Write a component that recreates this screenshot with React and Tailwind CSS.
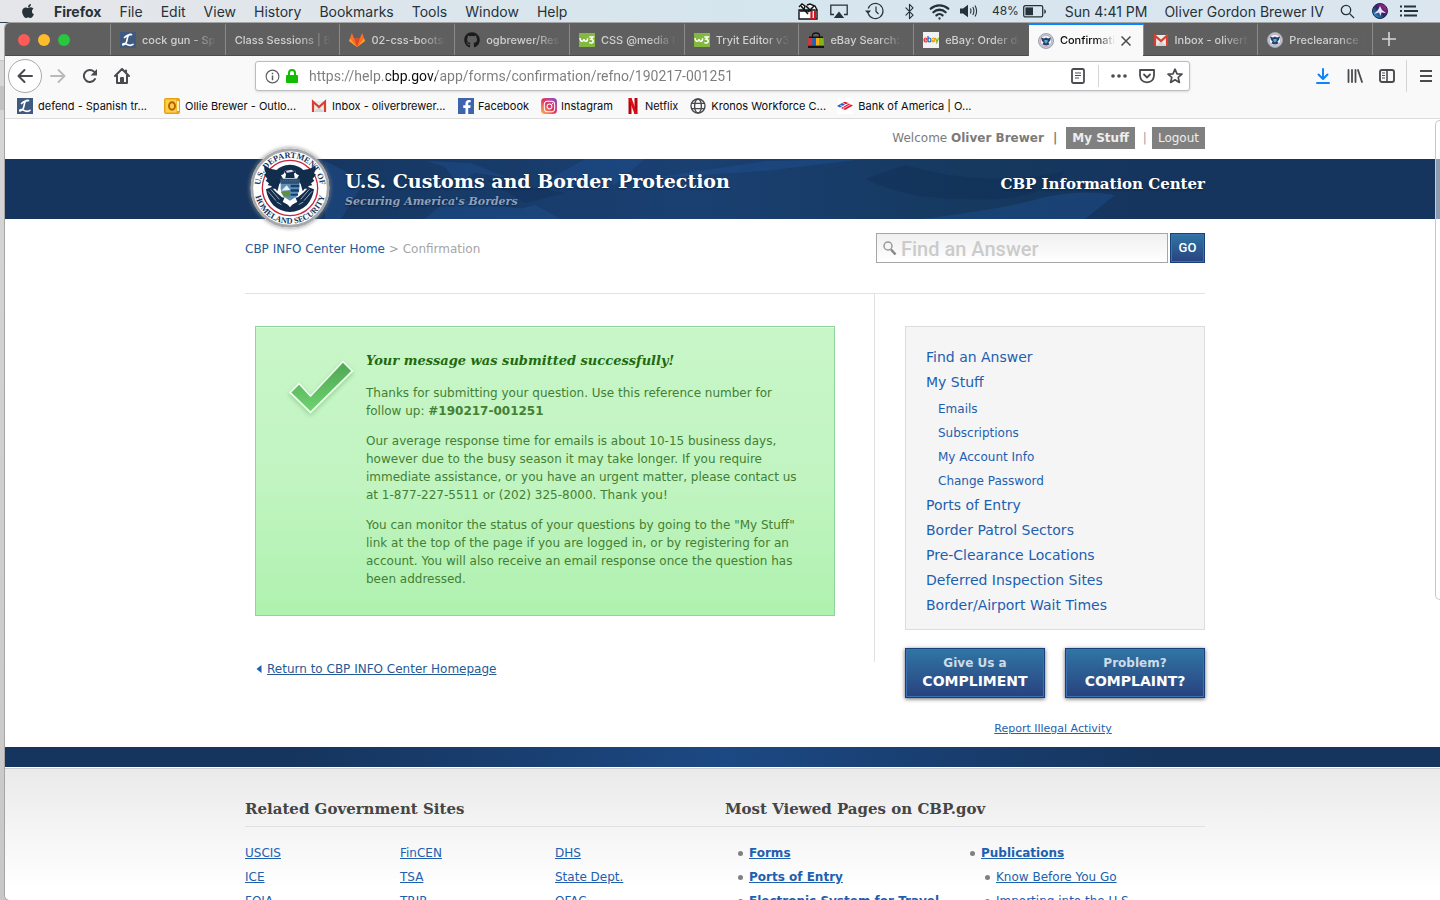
import React from "react";
import { FaApple, FaGithub, FaFacebookF, FaInstagram } from "react-icons/fa";
import { Bluetooth, Wifi } from "lucide-react";

/* ---------- Shared drawings ---------- */

function Seal({ className }) {
  return (
    <svg viewBox="0 0 240 240" className={className} role="img" aria-label="U.S. Department of Homeland Security seal">
      <circle cx="120" cy="120" r="115" fill="#fff" stroke="#a6a8ab" strokeWidth="9" />
      <SealText />
      <SealCore />
    </svg>
  );
}

function SealText() {
  return (
    <g fill="#17365e" fontFamily="Liberation Serif, serif" fontWeight="700" fontSize="25">
      <defs>
        <path id="seal-top" d="M30 120 A90 90 0 0 1 210 120" />
        <path id="seal-bottom" d="M13 120 A107 107 0 0 0 227 120" />
      </defs>
      <text textAnchor="middle"><textPath href="#seal-top" startOffset="50%">U.S. DEPARTMENT OF</textPath></text>
      <text textAnchor="middle"><textPath href="#seal-bottom" startOffset="50%">HOMELAND SECURITY</textPath></text>
    </g>
  );
}

function SealCore() {
  return (
    <g>
      <circle cx="120" cy="120" r="83" fill="#fff" stroke="#c8243c" strokeWidth="4" />
      <path d="M44 52 L60 62 L80 66 Q92 52 120 50 Q148 52 160 66 L180 62 L196 52 Q200 64 192 76 L198 80 L188 92 L193 98 L183 106 L187 112 L175 114 L177 122 L164 122 L158 130 L152 108 L140 94 L147 82 L139 78 L135 68 L120 65 L105 68 L101 78 L93 82 L100 94 L88 108 L82 130 L76 122 L63 122 L65 114 L53 112 L57 106 L47 98 L52 92 L42 80 L48 76 Q40 64 44 52Z" fill="#122c4c" />
      <path d="M103 72 Q108 62 122 62 Q134 64 138 74 L132 76 L134 90 L106 90 L108 78Z" fill="#122c4c" />
      <path d="M108 68 L124 65 L132 70 L122 73 L110 74Z" fill="#fff" opacity=".85" />
      <path d="M92 92 L148 92 L148 122 Q145 150 120 160 Q95 150 92 122Z" fill="#5f8fb5" />
      <path d="M92 92H148V107H92Z" fill="#244a70" />
      <path d="M94 97H146M94 102H146" stroke="#7f9bb5" strokeWidth="1.5" strokeDasharray="3 3" />
      <path d="M94 128 L110 112 L121 126Z" fill="#e8f0f4" />
      <path d="M93 132 L120 128 L120 146 L100 144Z" fill="#5d9140" />
      <path d="M122 110H148V118H122ZM122 124H147V131H122ZM122 137H144V143H122Z" fill="#173f6d" />
      <path d="M48 124 L64 118 L80 134 L96 148 L106 150 L104 164 L120 174 L136 164 L134 150 L144 148 L160 134 L176 118 L192 124 Q188 152 170 172 Q148 192 120 192 Q92 192 70 172 Q52 152 48 124Z" fill="#122c4c" />
      <path d="M54 130L78 158M62 124L88 154M186 130L162 158M178 124L152 154M80 162L94 170M160 162L146 170" stroke="#aebccb" strokeWidth="2.6" fill="none" />
      <path d="M104 148L120 158L136 148L142 162L128 168L120 178L112 168L98 162Z" fill="#fff" />
    </g>
  );
}

function MiniSeal() {
  return (
    <svg viewBox="0 0 16 16" className="size-4 shrink-0" aria-hidden="true">
      <circle cx="8" cy="8" r="7.5" fill="#c3cad3" stroke="#9aa5b3" />
      <circle cx="8" cy="8" r="5.6" fill="#f7f7f9" stroke="#c98c9a" strokeWidth=".6" />
      <path d="M3 4.6L6 5.4L8 4.6L10 5.4L13 4.6L12 8L10.4 9.6L11.6 11.2Q8 13.8 4.4 11.2L5.6 9.6L4 8Z" fill="#1d4470" />
      <path d="M6.4 7H9.6V9L8 10.6L6.4 9Z" fill="#6fa3c9" />
    </svg>
  );
}

function LIcon() {
  return (
    <svg viewBox="0 0 16 16" className="size-4 shrink-0" aria-hidden="true">
      <rect width="16" height="16" fill="#3f5a80" />
      <path d="M11.5 2.5C9 1.5 7.6 4 7.2 7C6.8 10 5.6 12.6 3 13C2 12 4 11 6 12C9 13.6 11 14 13 12.4M4.5 5.5C6 4 8.5 2.5 11.5 2.5" fill="none" stroke="#fff" strokeWidth="1.7" strokeLinecap="round" />
    </svg>
  );
}

function GitLabIcon() {
  return (
    <svg viewBox="0 0 16 16" className="size-4 shrink-0" aria-hidden="true">
      <path d="M8 15L0 9L2.8 1L5.2 6.5H10.8L13.2 1L16 9Z" fill="#fc6d26" />
      <path d="M8 15L5.2 6.5H10.8Z" fill="#e24329" />
      <path d="M8 15L0 9L1 6.5ZM8 15L16 9L15 6.5Z" fill="#fca326" />
    </svg>
  );
}

function GmailIcon() {
  return (
    <svg viewBox="0 0 16 16" className="size-4 shrink-0" aria-hidden="true">
      <path d="M1 3H15V14H1Z" fill="#eceaea" />
      <path d="M3 14L8 9L13 14Z" fill="#d6d3d3" />
      <path d="M2 14V3.6L8 9L14 3.6V14" fill="none" stroke="#d5402f" strokeWidth="2.2" />
    </svg>
  );
}

function W3Icon() {
  return (
    <svg viewBox="0 0 16 16" className="size-4 shrink-0" aria-hidden="true">
      <rect y="1" width="16" height="14" fill="#84b840" />
      <path d="M1 6Q1.5 9.5 3.2 9.3Q4.8 9 5 7Q5.4 9.5 7 9.2Q8.6 9 8.6 6.2M10.2 5H14L12 7.2Q14.6 7.4 14.2 9.6Q13.4 11.8 10.2 10.6" fill="none" stroke="#fff" strokeWidth="1.5" />
    </svg>
  );
}

function EbayBag() {
  return (
    <svg viewBox="0 0 16 16" className="size-4 shrink-0" aria-hidden="true">
      <path d="M4.5 5V3.5Q4.5 1 8 1Q11.5 1 11.5 3.5V5" fill="none" stroke="#151515" strokeWidth="1.3" />
      <path d="M1 4.4H15V6H1ZM0 13.4H16V16H0Z" fill="#151515" />
      <path d="M.4 6H4.4V13.4H0Z" fill="#e03236" /><path d="M4.4 6H8V13.4H4.4Z" fill="#1764c8" />
      <path d="M8 6H11.6V13.4H8Z" fill="#f2ae14" /><path d="M11.6 6H15.6L16 13.4H11.6Z" fill="#84b31c" />
    </svg>
  );
}

function EbayLogo() {
  return (
    <svg viewBox="0 0 16 16" className="size-4 shrink-0" aria-hidden="true">
      <rect width="16" height="16" fill="#f2f2f2" />
      <g fill="none" strokeWidth="1.2">
        <path d="M1 8H4Q4 6 2.5 6Q1 6 1 8Q1 10 2.6 10Q3.4 10 4 9.3" stroke="#e03236" />
        <path d="M5 4V10M5 8Q5 6 6.5 6Q8 6 8 8Q8 10 6.5 10Q5 10 5 8" stroke="#1764c8" />
        <path d="M9 6.6Q11.6 5.2 11.6 7.5V10M11.6 8Q8.8 8 9 9.2Q9.6 10.6 11.6 9" stroke="#e9a512" />
        <path d="M12.4 6L14 9.6M15.6 6L13.4 11.6" stroke="#84b31c" />
      </g>
    </svg>
  );
}

/* ---------- System menu bar ---------- */

function MenuBar() {
  const menus = ["File", "Edit", "View", "History", "Bookmarks", "Tools", "Window", "Help"];
  return (
    <header className="flex h-[23px] shrink-0 items-center border-b border-[#2f3f4c] bg-linear-to-r from-[#e6e6e9] via-[#d5e5ee] to-[#dbe6ef] pr-[22px] pl-5 font-[Inter,sans-serif] text-[14px] text-[#26323a]">
      <FaApple className="size-4" aria-label="Apple menu" />
      <nav className="ml-[18px] flex items-center gap-[18px]">
        <button className="font-bold">Firefox</button>
        {menus.map((m) => <button key={m}>{m}</button>)}
      </nav>
      <div className="ml-auto flex items-center whitespace-nowrap">
        <svg viewBox="0 0 20 17" className="h-[17px] w-5" aria-hidden="true">
          <path d="M1 7H19V16H1Z" fill="#fff" stroke="#111" strokeWidth="1.4" />
          <path d="M1 4L4 1L7 3L6 6M9 2L12 1L17 3L19 7" fill="#fff" stroke="#111" strokeWidth="1.4" />
          <path d="M3 3L10 11M8 3L14 9M10 9L16 3M2 8H12" stroke="#111" strokeWidth="1.5" />
          <path d="M13.5 8V16M17 8V16" stroke="#d8121c" strokeWidth="2.2" />
        </svg>
        <svg viewBox="0 0 18 15" className="ml-3 h-[15px] w-[18px]" aria-hidden="true">
          <path d="M4 10.5H.8V1.2H17.2V10.5H14" fill="none" stroke="#26323a" strokeWidth="1.3" />
          <path d="M9 7.5L14.2 14H3.8Z" fill="#26323a" />
        </svg>
        <svg viewBox="0 0 20 18" className="ml-[17px] h-[18px] w-5" fill="none" stroke="#26323a" strokeWidth="1.2" aria-hidden="true">
          <path d="M3.2 11.5A7.6 7.6 0 1 0 3.2 6.5" /><path d="M11 4.5V9.5L13.5 12" /><path d="M0 8.4H6L3 12Z" fill="#26323a" stroke="none" />
        </svg>
        <Bluetooth className="ml-4 size-[17px]" strokeWidth={1.6} />
        <Wifi className="ml-[11px] size-[21px]" strokeWidth={2.6} />
        <svg viewBox="0 0 18 14" className="ml-[10px] h-[14px] w-[18px]" aria-hidden="true">
          <path d="M0 4.5H3L8 .8V13.2L3 9.5H0Z" fill="#26323a" />
          <path d="M10.4 4.6Q11.6 7 10.4 9.4M12.8 3Q15 7 12.8 11M15 1.4Q18.2 7 15 12.6" fill="none" stroke="#26323a" strokeWidth="1.1" />
        </svg>
        <span className="ml-[14px] text-[12px]">48%</span>
        <svg viewBox="0 0 24 13" className="ml-1 h-[13px] w-6" aria-hidden="true">
          <rect x=".7" y=".7" width="19" height="11.2" rx="1.6" fill="none" stroke="#26323a" strokeWidth="1.3" />
          <rect x="2.4" y="2.4" width="7.6" height="7.8" fill="#26323a" /><path d="M21.3 4V9Q23 8 23 6.5Q23 5 21.3 4Z" fill="#26323a" />
        </svg>
        <span className="ml-[18px]">Sun 4:41 PM</span>
        <span className="ml-[17px]">Oliver Gordon Brewer IV</span>
        <svg viewBox="0 0 16 16" className="ml-4 size-[15px]" fill="none" stroke="#26323a" strokeWidth="1.4" aria-hidden="true">
          <circle cx="6.4" cy="6.4" r="5" /><path d="M10 10L15 15" />
        </svg>
        <svg viewBox="0 0 16 16" className="ml-[17px] size-4" aria-hidden="true">
          <defs><linearGradient id="siri" x1="0" y1="1" x2="1" y2="0"><stop offset="0" stopColor="#1ac7e8" /><stop offset=".5" stopColor="#2b2268" /><stop offset="1" stopColor="#e0289c" /></linearGradient></defs>
          <circle cx="8" cy="8" r="7.5" fill="url(#siri)" stroke="#20244c" />
          <path d="M8 3L10 7L14 10L9.5 9.5L8.5 13L7 9.5L2 11L6 7Z" fill="#e8e4ff" />
        </svg>
        <svg viewBox="0 0 18 12" className="ml-3 h-3 w-[18px]" stroke="#26323a" strokeWidth="1.8" aria-hidden="true">
          <path d="M0 1.5H2M0 6H2M0 10.5H2M4 1.5H16M4 6H18M4 10.5H17" />
        </svg>
      </div>
    </header>
  );
}

/* ---------- Browser chrome ---------- */

const tabs = [
  { title: "cock gun - Spanish", icon: <LIcon /> },
  { title: "Class Sessions | Boot", icon: null },
  { title: "02-css-bootstrap", icon: <GitLabIcon /> },
  { title: "ogbrewer/Respons", icon: <FaGithub className="size-4 shrink-0 text-[#1b1b1b]" /> },
  { title: "CSS @media Rule", icon: <W3Icon /> },
  { title: "Tryit Editor v3.6", icon: <W3Icon /> },
  { title: "eBay Search: Adv", icon: <EbayBag /> },
  { title: "eBay: Order details", icon: <EbayLogo /> },
  { title: "Confirmation", icon: <MiniSeal />, active: true },
  { title: "Inbox - oliverbrewer", icon: <GmailIcon /> },
  { title: "Preclearance Loc", icon: <MiniSeal /> },
];

function TabStrip() {
  return (
    <div className="flex h-[33px] shrink-0 border-b border-[#4c4c4c] bg-[#5f5f5f] text-[11px]">
      <div className="flex w-[105px] shrink-0 items-center gap-2 pt-px pl-[13px]">
        <button aria-label="Close window" className="size-3 rounded-full bg-[#fc5b57]" />
        <button aria-label="Minimize window" className="size-3 rounded-full bg-[#fdbc2e]" />
        <button aria-label="Zoom window" className="size-3 rounded-full bg-[#28c73f]" />
      </div>
      <div className="flex min-w-0 flex-1" role="tablist">
        {tabs.map((t, i) => (
          <div
            key={i}
            className={
              t.active
                ? "-mb-px flex min-w-0 flex-1 items-center border-t-2 border-l border-t-[#0a84ff] border-l-[#5f5f5f] bg-[#f9f9fa] pr-2 pl-[9px] text-[#0c0c0d]"
                : "flex min-w-0 flex-1 items-center border-t-2 border-l border-t-transparent border-l-[#8a8a8a] pr-2 pl-[9px] text-[#d0d0d0]"
            }
          >
            <button role="tab" aria-selected={!!t.active} className="flex min-w-0 flex-1 items-center gap-[6px] text-left font-medium">
              {t.icon}
              <span className="min-w-0 flex-1 overflow-hidden [mask-image:linear-gradient(to_right,black_65%,transparent)] whitespace-nowrap">{t.title}</span>
            </button>
            {t.active && (
              <button aria-label="Close tab" className="mr-1 ml-[6px]">
                <svg viewBox="0 0 10 10" className="size-[10px]" stroke="#4a4a4f" strokeWidth="1.5"><path d="M.5 .5L9.5 9.5M9.5 .5L.5 9.5" /></svg>
              </button>
            )}
          </div>
        ))}
      </div>
      <div className="flex w-[73px] shrink-0 items-center border-l border-[#8a8a8a] pl-[9px]">
        <button aria-label="New tab">
          <svg viewBox="0 0 14 14" className="size-[14px]" stroke="#d8d8d8" strokeWidth="1.6"><path d="M7 0V14M0 7H14" /></svg>
        </button>
      </div>
    </div>
  );
}

function NavBar() {
  const ib = "flex size-8 shrink-0 items-center justify-center";
  return (
    <div className="flex h-10 shrink-0 items-center bg-[#f9f9fa] pr-[3px] pl-[3px] text-[#4a4a4f]">
      <button aria-label="Back" className="flex size-[34px] shrink-0 items-center justify-center rounded-full border border-[#a9a9ab] bg-white">
        <svg viewBox="0 0 16 16" className="size-4" fill="none" stroke="#4a4a4f" strokeWidth="2" strokeLinecap="round" strokeLinejoin="round"><path d="M15 8H1.5M7.5 2L1.5 8L7.5 14" /></svg>
      </button>
      <button aria-label="Forward" disabled className={ib}>
        <svg viewBox="0 0 16 16" className="size-4" fill="none" stroke="#b9b9bb" strokeWidth="1.8" strokeLinecap="round" strokeLinejoin="round"><path d="M1 8H14.5M8.5 2L14.5 8L8.5 14" /></svg>
      </button>
      <button aria-label="Reload" className={ib}>
        <svg viewBox="0 0 16 16" className="size-4" fill="none" stroke="currentColor" strokeWidth="2" strokeLinecap="round"><path d="M13 11A6 6 0 1 1 12 3.6" /><path d="M15 1V7.4H8.6Z" fill="currentColor" stroke="none" /></svg>
      </button>
      <button aria-label="Home" className={ib}>
        <svg viewBox="0 0 16 16" className="size-4" fill="none" stroke="currentColor" strokeWidth="2" strokeLinecap="round" strokeLinejoin="round"><path d="M1 8L8 1L15 8M3 7.5V15H13V7.5" /><path d="M7 15V10H9V15" /><path d="M12 2.5V4" /></svg>
      </button>
      <div className="mr-[117px] ml-[117px] flex h-[30px] min-w-0 flex-1 items-center rounded-[3px] border border-[#bdbdbf] bg-white shadow-sm">
        <svg viewBox="0 0 16 16" className="ml-[9px] size-[15px] shrink-0" fill="none" stroke="#5c5c60" strokeWidth="1.2" aria-hidden="true"><circle cx="8" cy="8" r="6.8" /><path d="M8 7V12M8 4V5.6" strokeWidth="1.6" /></svg>
        <svg viewBox="0 0 12 14" className="ml-[6px] h-[14px] w-3 shrink-0" aria-hidden="true"><path d="M3 7V4Q3 1 6 1Q9 1 9 4V7" fill="none" stroke="#12bc00" strokeWidth="2" /><rect y="6" width="12" height="8" rx="1" fill="#12bc00" /></svg>
        <label htmlFor="url" className="sr-only">Address</label>
        <input
          id="url"
          defaultValue="https://help.cbp.gov/app/forms/confirmation/refno/190217-001251"
          className="ml-[11px] min-w-0 flex-1 bg-linear-[to_right,#7c7c80_77px,#0c0c0d_77px,#0c0c0d_127px,#7c7c80_127px] bg-clip-text pt-px font-[Roboto,sans-serif] text-[14px] text-transparent outline-none"
        />
        <button aria-label="Reader view" className="shrink-0">
          <svg viewBox="0 0 14 16" className="h-4 w-[14px]" fill="none" stroke="currentColor"><rect x="1" y="1" width="12" height="14" rx="1.5" strokeWidth="1.8" /><path d="M4 5H10M4 7.5H10M4 10H8" /></svg>
        </button>
        <span className="ml-[13px] h-[22px] w-px shrink-0 bg-[#d4d4d6]" />
        <button aria-label="Page actions" className="ml-3 shrink-0">
          <svg viewBox="0 0 16 4" className="h-1 w-4" fill="currentColor"><circle cx="2" cy="2" r="1.8" /><circle cx="8" cy="2" r="1.8" /><circle cx="14" cy="2" r="1.8" /></svg>
        </button>
        <button aria-label="Save to Pocket" className="ml-3 shrink-0">
          <svg viewBox="0 0 16 16" className="size-4" fill="none" stroke="currentColor" strokeWidth="1.8" strokeLinecap="round" strokeLinejoin="round"><path d="M1 2H15V7.5Q14.5 14 8 14.4Q1.5 14 1 7.5Z" /><path d="M5 6.5L8 9.5L11 6.5" /></svg>
        </button>
        <button aria-label="Bookmark this page" className="mr-[6px] ml-3 shrink-0">
          <svg viewBox="0 0 16 16" className="size-4" fill="none" stroke="currentColor" strokeWidth="1.7" strokeLinejoin="round"><path d="M8 1.2L10 5.8L15 6.2L11.2 9.4L12.4 14.4L8 11.8L3.6 14.4L4.8 9.4L1 6.2L6 5.8Z" /></svg>
        </button>
      </div>
      <button aria-label="Downloads" className={ib}>
        <svg viewBox="0 0 14 16" className="h-4 w-[14px]" fill="none" stroke="#0a84ff" strokeWidth="2" strokeLinecap="round" strokeLinejoin="round"><path d="M7 1V10.5M2.5 6.5L7 11L11.5 6.5M1 15H13" /></svg>
      </button>
      <button aria-label="Library" className={ib}>
        <svg viewBox="0 0 16 16" className="size-4" fill="none" stroke="currentColor" strokeWidth="1.8" strokeLinecap="round"><path d="M1.5 2V14M5 2V14M8.5 2V14M11 2L15 14" /></svg>
      </button>
      <button aria-label="Sidebars" className={ib}>
        <svg viewBox="0 0 16 16" className="size-4" fill="none" stroke="currentColor"><rect x="1" y="2" width="14" height="12" rx="2" strokeWidth="1.9" /><path d="M8 2V14" strokeWidth="1.6" /><path d="M3 5H6M3 7.5H6M3 10H6" /></svg>
      </button>
      <span className="ml-[3px] h-8 w-px shrink-0 bg-[#d4d4d6]" />
      <button aria-label="Open menu" className="ml-[3px] flex size-8 shrink-0 items-center justify-center">
        <svg viewBox="0 0 14 12" className="h-3 w-[14px]" stroke="currentColor" strokeWidth="2"><path d="M1 1H13M1 6H13M1 11H13" /></svg>
      </button>
    </div>
  );
}

const bookmarks = [
  { title: "defend - Spanish tr...", wide: true, icon: <LIcon /> },
  {
    title: "Ollie Brewer - Outlo...", wide: true,
    icon: (
      <svg viewBox="0 0 16 16" className="size-4 shrink-0" aria-hidden="true">
        <rect width="16" height="16" rx="2" fill="#e9a013" /><rect x="1.5" y="1.5" width="11" height="13" fill="#fbd04a" /><path d="M13 3H15V13H13Z" fill="#fff3c4" /><ellipse cx="8" cy="8" rx="3" ry="3.8" fill="none" stroke="#b86300" strokeWidth="2" />
      </svg>
    ),
  },
  { title: "Inbox - oliverbrewer...", wide: true, icon: <GmailIcon /> },
  { title: "Facebook", icon: <span className="flex size-4 shrink-0 items-end justify-end bg-[#4064ac]"><FaFacebookF className="size-[14px] text-white" /></span> },
  { title: "Instagram", icon: <span className="flex size-4 shrink-0 items-center justify-center rounded bg-linear-to-tr from-[#fdb447] via-[#e5305f] to-[#7a3fd0]"><FaInstagram className="size-[13px] text-white" /></span> },
  { title: "Netflix", icon: <svg viewBox="0 0 16 16" className="size-4 shrink-0" aria-hidden="true"><path d="M3.5 0H6.5V16H3.5ZM9.5 0H12.5V16H9.5Z" fill="#b1060f" /><path d="M3.5 0H6.5L12.5 16H9.5Z" fill="#e50914" /></svg> },
  { title: "Kronos Workforce C...", wide: true, icon: <svg viewBox="0 0 16 16" className="size-4 shrink-0" fill="none" stroke="#4a4a4f" strokeWidth="1.4" aria-hidden="true"><circle cx="8" cy="8" r="7" /><ellipse cx="8" cy="8" rx="3.4" ry="7" /><path d="M1.6 5.4H14.4M1.6 10.6H14.4" /></svg> },
  { title: "Bank of America | O...", wide: true, icon: <svg viewBox="0 0 16 16" className="size-4 shrink-0" aria-hidden="true"><rect width="16" height="16" fill="#fff" /><path d="M0 8L5 5L8 6.5L3 9.5Z" fill="#2a5ebc" /><path d="M4 10L12 5.5L16 7.5L8 12ZM5.5 4.8L8 3.8L11.5 5L9 6.2Z" fill="#dc1f35" /><path d="M6 10.6L13.6 6.4M3 7L7 9" stroke="#fff" strokeWidth=".7" /></svg> },
];

function BookmarksBar() {
  return (
    <nav className="flex h-[23px] shrink-0 items-center border-b border-[#dcdcdd] bg-[#f9f9fa] pb-[2px] pl-3 text-[11px] text-[#0c0c0d]">
      {bookmarks.map((b) => (
        <a key={b.title} href="#" className={b.wide ? "flex w-[147px] shrink-0 items-center gap-[5px] whitespace-nowrap" : "flex shrink-0 items-center gap-[4px] pr-3 whitespace-nowrap"}>
          {b.icon}
          {b.title}
        </a>
      ))}
    </nav>
  );
}

/* ---------- Site ---------- */

const container = "mx-auto w-full max-w-[960px]";

function Masthead() {
  return (
    <>
      <div className={container + " flex h-10 items-center justify-end pb-[3px] text-[12px] text-[#7b7b7b]"}>
        <span>Welcome <b>Oliver Brewer</b></span>
        <b className="mx-[9px]">|</b>
        <a href="#" className="bg-[#808080] px-[6px] leading-[22px] font-bold text-[#eee]">My Stuff</a>
        <span className="mr-[5px] ml-2 text-[#a0a0a0]">|</span>
        <a href="#" className="bg-[#808080] px-[6px] leading-[22px] text-[#eee]">Logout</a>
      </div>
      <div className="relative bg-[#15355e]">
        <svg viewBox="0 0 1440 60" preserveAspectRatio="xMidYMid slice" className="absolute inset-0 size-full" aria-hidden="true">
          <defs>
            <linearGradient id="flag" x1="0" x2="1"><stop offset="0" stopColor="#15355e" /><stop offset=".5" stopColor="#1a4072" /><stop offset=".8" stopColor="#15395f" /><stop offset="1" stopColor="#15355e" /></linearGradient>
          </defs>
          <rect x="240" width="900" height="60" fill="url(#flag)" />
          <g fill="#1f5090" opacity=".45">
            <path d="M320 2L360 22L336 60L320 60ZM422 2L466 4L500 18L470 14L452 24L440 8ZM548 18L580 0L640 0L610 26L580 20L556 32ZM436 46L462 42L520 50L540 60H420ZM490 56L530 46L556 60H490Z" />
            <path d="M640 20L760 2L860 0L760 12ZM916 60Q1000 50 1040 38Q1080 30 1110 36L1080 60Z" />
          </g>
          <path d="M900 6Q980 30 1060 12Q1040 44 960 40Q900 40 860 20ZM480 20L560 34L520 44Z" fill="#0f2b50" opacity=".35" />
        </svg>
        <div className={container + " relative flex h-[60px] justify-between pl-[100px] font-['DejaVu_Serif',serif] font-bold text-white"}>
          <Seal className="absolute -top-[11px] left-[5px] size-20 rounded-full shadow-[0_0_4px_#888]" />
          <div className="pt-[10px] [text-shadow:0_1px_2px_#0a2240]">
            <h1 className="text-[19px] leading-6">U.S. Customs and Border Protection</h1>
            <p className="text-[11px] leading-[18px] text-[#8fa0b8] italic">Securing America&apos;s Borders</p>
          </div>
          <h2 className="pt-[13px] text-[15px] leading-6 [text-shadow:0_1px_2px_#0a2240]">CBP Information Center</h2>
        </div>
      </div>
    </>
  );
}

function SearchRow() {
  return (
    <div className={container + " flex items-start justify-between border-b border-[#e3e3e3] pt-[14px] pb-7"}>
      <nav className="text-[12px] leading-8 text-[#a5a5a5]">
        <a href="#" className="text-[#255a96]">CBP INFO Center Home</a> &gt; Confirmation
      </nav>
      <form className="flex gap-[2px]" onSubmit={(e) => e.preventDefault()}>
        <label htmlFor="search" className="flex h-[30px] w-[292px] items-center border border-[#a6a6a6] bg-linear-to-b from-[#f0f0f0] to-white pl-[6px]">
          <svg viewBox="0 0 14 15" className="h-[15px] w-[14px] shrink-0" fill="none" aria-hidden="true"><circle cx="5" cy="5" r="4" stroke="#999" strokeWidth="1.5" /><path d="M8 8.5L12.5 13.5" stroke="#888" strokeWidth="2.6" /></svg>
          <input id="search" placeholder="Find an Answer" aria-label="Find an Answer" className="ml-1 min-w-0 flex-1 bg-transparent pt-px font-[Roboto,sans-serif] text-[20px] leading-7 font-medium outline-none placeholder:text-[#cbcbcb]" />
        </label>
        <button className="h-[30px] w-[35px] border border-[#173f7c] bg-linear-to-b from-[#2f76a5] to-[#28427f] font-[Roboto,sans-serif] text-[13px] font-medium text-white shadow-[inset_0_0_0_1px_#3a72b4]">GO</button>
      </form>
    </div>
  );
}

function Success() {
  return (
    <section className="flex h-[290px] border border-[#8fd49a] bg-linear-to-b from-[#c8f6c8] via-[#c2f4c2] to-[#aff1af] shadow-[inset_0_1px_0_#e2fbe2]">
      <div className="w-[110px] shrink-0 pt-[31px] pl-[31px]">
        <svg viewBox="0 0 68 60" className="h-[60px] w-[68px] drop-shadow-[0_2px_2px_rgba(60,150,60,.35)]" aria-hidden="true">
          <defs><linearGradient id="check" x1="0" y1="0" x2="0" y2="1"><stop offset="0" stopColor="#4fa653" /><stop offset="1" stopColor="#6fd371" /></linearGradient></defs>
          <path d="M3 34.5L12 25.5L23.5 38L56 3.5L65.5 13L23.5 54.5Z" fill="url(#check)" stroke="#ecfbec" strokeWidth="1.8" />
        </svg>
      </div>
      <div className="pt-6 text-[12px] leading-[18px] whitespace-nowrap text-[#447f33]">
        <h2 className="font-['DejaVu_Serif',serif] text-[13px] leading-5 font-bold text-[#23690f] italic">Your message was submitted successfully!</h2>
        <p className="mt-[13px]">Thanks for submitting your question. Use this reference number for<br />follow up: <b>#190217-001251</b></p>
        <p className="mt-3">Our average response time for emails is about 10-15 business days,<br />however due to the busy season it may take longer. If you require<br />immediate assistance, or you have an urgent matter, please contact us<br />at 1-877-227-5511 or (202) 325-8000. Thank you!</p>
        <p className="mt-3">You can monitor the status of your questions by going to the &quot;My Stuff&quot;<br />link at the top of the page if you are logged in, or by registering for an<br />account. You will also receive an email response once the question has<br />been addressed.</p>
      </div>
    </section>
  );
}

function Sidebar() {
  const cta = "flex h-[50px] flex-1 flex-col items-center justify-center border border-[#173f7c] bg-linear-to-b from-[#2f76a5] to-[#28427f] pb-[2px] text-[12px] leading-[18px] font-bold text-[#cfdbe6] shadow-[inset_0_0_0_1px_#3a72b4,0_1px_4px_#666]";
  return (
    <aside className="w-[300px] shrink-0 pt-8">
      <nav className="h-[304px] border border-[#dcdcdc] bg-[#f5f5f5] pt-[18px] pl-5 text-[14px] leading-[25px] text-[#1d60b0]">
        <ul>
          <li><a href="#">Find an Answer</a></li>
          <li>
            <a href="#">My Stuff</a>
            <ul className="pt-[2px] pl-3 text-[12px] leading-6">
              {["Emails", "Subscriptions", "My Account Info", "Change Password"].map((s) => <li key={s}><a href="#">{s}</a></li>)}
            </ul>
          </li>
          {["Ports of Entry", "Border Patrol Sectors", "Pre-Clearance Locations", "Deferred Inspection Sites", "Border/Airport Wait Times"].map((s) => <li key={s}><a href="#">{s}</a></li>)}
        </ul>
      </nav>
      <div className="mt-[18px] flex gap-5">
        <a href="#" className={cta}>Give Us a<span className="text-[14px] text-white">COMPLIMENT</span></a>
        <a href="#" className={cta}>Problem?<span className="text-[14px] text-white">COMPLAINT?</span></a>
      </div>
      <p className="mt-[21px] pr-1 pb-2 text-center text-[11px] leading-5"><a href="#" className="text-[#1d60b0] underline">Report Illegal Activity</a></p>
    </aside>
  );
}

function Footer() {
  const gov = [["USCIS", "ICE", "FOIA"], ["FinCEN", "TSA", "TRIP"], ["DHS", "State Dept.", "OFAC"]];
  const h = "border-b border-[#e0e0e0] pb-[5px] font-['DejaVu_Serif',serif] text-[15px] leading-6 font-bold text-[#454545]";
  const dot = "flex items-center gap-[6px] before:size-[5px] before:rounded-full before:bg-[#808080]";
  return (
    <footer>
      <div className="h-5 bg-linear-to-r from-[#15355e] from-20% via-[#1c4883] to-[#15355e] to-80%" />
      <div className="mt-px border-t border-[#cfcfcf] bg-linear-to-b from-[#eaeaea] to-white to-[120px] pt-7 pb-10 text-[12px] leading-6">
        <div className={container + " grid grid-cols-2"}>
          <section>
            <h2 className={h}>Related Government Sites</h2>
            <div className="flex pt-[14px] text-[#1d60b0] underline">
              {gov.map((c) => (
                <ul key={c[0]} className="w-[155px]">{c.map((l) => <li key={l}><a href="#">{l}</a></li>)}</ul>
              ))}
            </div>
          </section>
          <section>
            <h2 className={h}>Most Viewed Pages on CBP.gov</h2>
            <div className="flex pt-[14px] pl-[13px] whitespace-nowrap text-[#1d60b0]">
              <ul className="w-[232px] font-bold">
                {["Forms", "Ports of Entry", "Electronic System for Travel"].map((l) => <li key={l} className={dot}><a href="#" className="underline">{l}</a></li>)}
              </ul>
              <ul>
                <li className={dot}><a href="#" className="font-bold underline">Publications</a></li>
                <li>
                  <ul className="pl-[15px]">
                    {["Know Before You Go", "Importing into the U.S."].map((l) => <li key={l} className={dot}><a href="#" className="underline">{l}</a></li>)}
                  </ul>
                </li>
              </ul>
            </div>
          </section>
        </div>
      </div>
    </footer>
  );
}

export default function App() {
  return (
    <div className="flex h-screen flex-col overflow-hidden bg-linear-[to_bottom,#e9e9e9_60px,#b4b4b4_60px,#d6d6d6_61px,#d6d6d6_86px,#c2c2c2_86px,#c2c2c2_110px,#d6d6d6_110px,#c8c8c8]">
      <MenuBar />
      <div className="relative ml-[5px] flex min-h-0 w-full flex-1 flex-col overflow-hidden rounded-l-[5px] bg-white font-[Inter,sans-serif] shadow-[0_0_0_1px_#a5a5a5]">
        <TabStrip />
        <NavBar />
        <BookmarksBar />
        <main className="min-h-0 flex-1 overflow-hidden font-['DejaVu_Sans',sans-serif]">
          <Masthead />
          <SearchRow />
          <div className={container + " flex"}>
            <div className="min-w-0 flex-1 pt-8 pl-[10px]">
              <div className="pr-[39px]"><Success /></div>
              <p className="mt-[43px] flex items-center gap-[5px] pl-px text-[12px] leading-5">
                <svg viewBox="0 0 5 8" className="h-2 w-[6px]" aria-hidden="true"><path d="M5 0V8L0 4Z" fill="#1d60b0" /></svg>
                <a href="#" className="text-[#255a96] underline">Return to CBP INFO Center Homepage</a>
              </p>
            </div>
            <div className="mr-[30px] h-[368px] w-px shrink-0 bg-[#e0e0e0]" />
            <Sidebar />
          </div>
          <Footer />
        </main>
        <div className="absolute top-[97px] right-[5px] h-[480px] w-[5px] rounded-l-[5px] border-y border-l border-[#c9c9c9] bg-white/50" />
      </div>
    </div>
  );
}
